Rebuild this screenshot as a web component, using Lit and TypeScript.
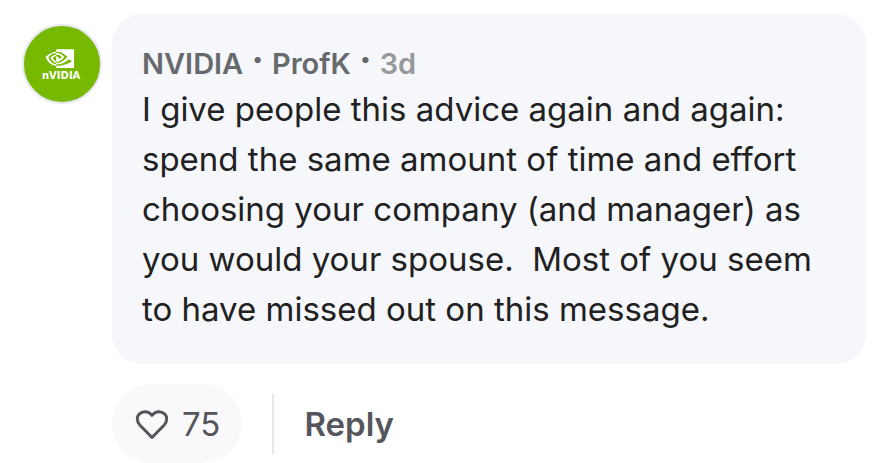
import { LitElement, html, css } from "lit";
import { customElement, property, state } from "lit/decorators.js";

@customElement("company-avatar")
export class CompanyAvatar extends LitElement {
  static styles = css`
    :host {
      display: block;
      flex: none;
    }
    .disc {
      box-sizing: border-box;
      display: block;
      width: 80px;
      height: 80px;
      border: 2px solid #e6e7ee;
      border-radius: 50%;
      background: #76b900;
    }
    .word {
      font: 700 10px "DejaVu Sans", sans-serif;
    }
  `;

  render() {
    return html`
      <svg class="disc" viewBox="0 0 76 76" fill="#fff" role="img" aria-label="NVIDIA">
        <path
          transform="translate(21.5 18.3) scale(1.19)"
          d="M8.948 8.798v-1.43a6.7 6.7 0 0 1 .424-.018c3.922-.124 6.493 3.374 6.493 3.374s-2.774 3.851-5.75 3.851c-.398 0-.787-.062-1.158-.185v-4.346c1.528.185 1.837.857 2.747 2.385l2.04-1.714s-1.492-1.952-4-1.952a6.016 6.016 0 0 0-.796.035m0-4.735v2.138l.424-.027c5.45-.185 9.01 4.47 9.01 4.47s-4.08 4.964-8.33 4.964c-.37 0-.733-.035-1.095-.097v1.325c.3.035.61.062.91.062 3.957 0 6.82-2.023 9.593-4.408.459.371 2.34 1.263 2.73 1.652-2.633 2.208-8.772 3.984-12.253 3.984-.335 0-.653-.018-.971-.053v1.864H24V4.063zm0 10.326v1.131c-3.657-.654-4.673-4.46-4.673-4.46s1.758-1.944 4.673-2.262v1.237H8.94c-1.528-.186-2.73 1.245-2.73 1.245s.68 2.412 2.739 3.11M2.456 10.9s2.164-3.197 6.5-3.533V6.201C4.153 6.59 0 10.653 0 10.653s2.35 6.802 8.948 7.42v-1.237c-4.84-.6-6.492-5.936-6.492-5.936"
        />
        <text class="word" x="18" y="53">nVIDIA</text>
      </svg>
    `;
  }
}

@customElement("like-button")
export class LikeButton extends LitElement {
  @property({ type: Number }) count = 0;
  @state() private liked = false;

  static styles = css`
    :host {
      display: block;
    }
    .like {
      display: flex;
      align-items: center;
      gap: 12px;
      min-height: 79px;
      padding: 0 22px;
      border: 0;
      border-radius: 40px;
      background: #f9f9fc;
      color: #55565b;
      font: 400 33px/50px Inter, sans-serif;
      cursor: pointer;
    }
    .heart {
      width: 36px;
      height: 36px;
    }
  `;

  render() {
    return html`
      <button
        class="like"
        aria-label="Like"
        aria-pressed=${this.liked ? "true" : "false"}
        @click=${() => (this.liked = !this.liked)}
      >
        <svg
          class="heart"
          viewBox="0 0 36 36"
          fill=${this.liked ? "currentColor" : "none"}
          stroke="currentColor"
          stroke-width="3"
          stroke-linejoin="round"
          aria-hidden="true"
        >
          <path
            d="M18 31.5 6 19.2C2.4 15.4 2.6 10.6 5.4 7.9C8.4 5 14.4 4.4 18 9.4C21.6 4.4 27.6 5 30.6 7.9C33.4 10.6 33.6 15.4 30 19.2Z"
          />
        </svg>
        <span>${this.count + (this.liked ? 1 : 0)}</span>
      </button>
    `;
  }
}

@customElement("app-root")
export class AppRoot extends LitElement {
  static styles = css`
    :host {
      display: block;
      background: #fff;
      font-family: Inter, sans-serif;
    }
    .comment {
      display: flex;
      align-items: flex-start;
      gap: 10px;
      padding: 14px 21px 0 22px;
    }
    .avatar {
      margin-top: 10px;
    }
    .main {
      flex: 1;
      min-width: 0;
    }
    .bubble {
      padding: 30px;
      border-radius: 30px;
      background: #f6f7fb;
    }
    .meta {
      display: flex;
      align-items: baseline;
      gap: 8px;
      color: #666a6d;
      font-size: 29px;
      font-weight: 600;
      line-height: 40px;
    }
    .meta a {
      color: inherit;
      text-decoration: none;
    }
    .meta time {
      color: #95989c;
    }
    .dot {
      font-size: 40px;
      line-height: 20px;
    }
    .text {
      margin: 0;
      color: #212121;
      font-size: 33px;
      line-height: 50px;
      white-space: pre-wrap;
    }
    .actions {
      display: flex;
      align-items: center;
      gap: 30px;
      padding-top: 20px;
    }
    .divider {
      width: 2px;
      height: 60px;
      background: #e6e7ee;
    }
    .reply {
      padding: 0;
      border: 0;
      background: none;
      color: #55565b;
      font: 600 33px/50px Inter, sans-serif;
      cursor: pointer;
    }
  `;

  private body =
    "I give people this advice again and again: spend the same amount of time and effort choosing your company (and manager) as you would your spouse.  Most of you seem to have missed out on this message.";

  render() {
    return html`
      <article class="comment">
        <company-avatar class="avatar"></company-avatar>
        <div class="main">
          <div class="bubble">
            <div class="meta">
              <a href="#company">NVIDIA</a>
              <span class="dot">·</span>
              <a href="#author">ProfK</a>
              <span class="dot">·</span>
              <time>3d</time>
            </div>
            <p class="text">${this.body}</p>
          </div>
          <div class="actions">
            <like-button .count=${75}></like-button>
            <span class="divider"></span>
            <button class="reply">Reply</button>
          </div>
        </div>
      </article>
    `;
  }
}
